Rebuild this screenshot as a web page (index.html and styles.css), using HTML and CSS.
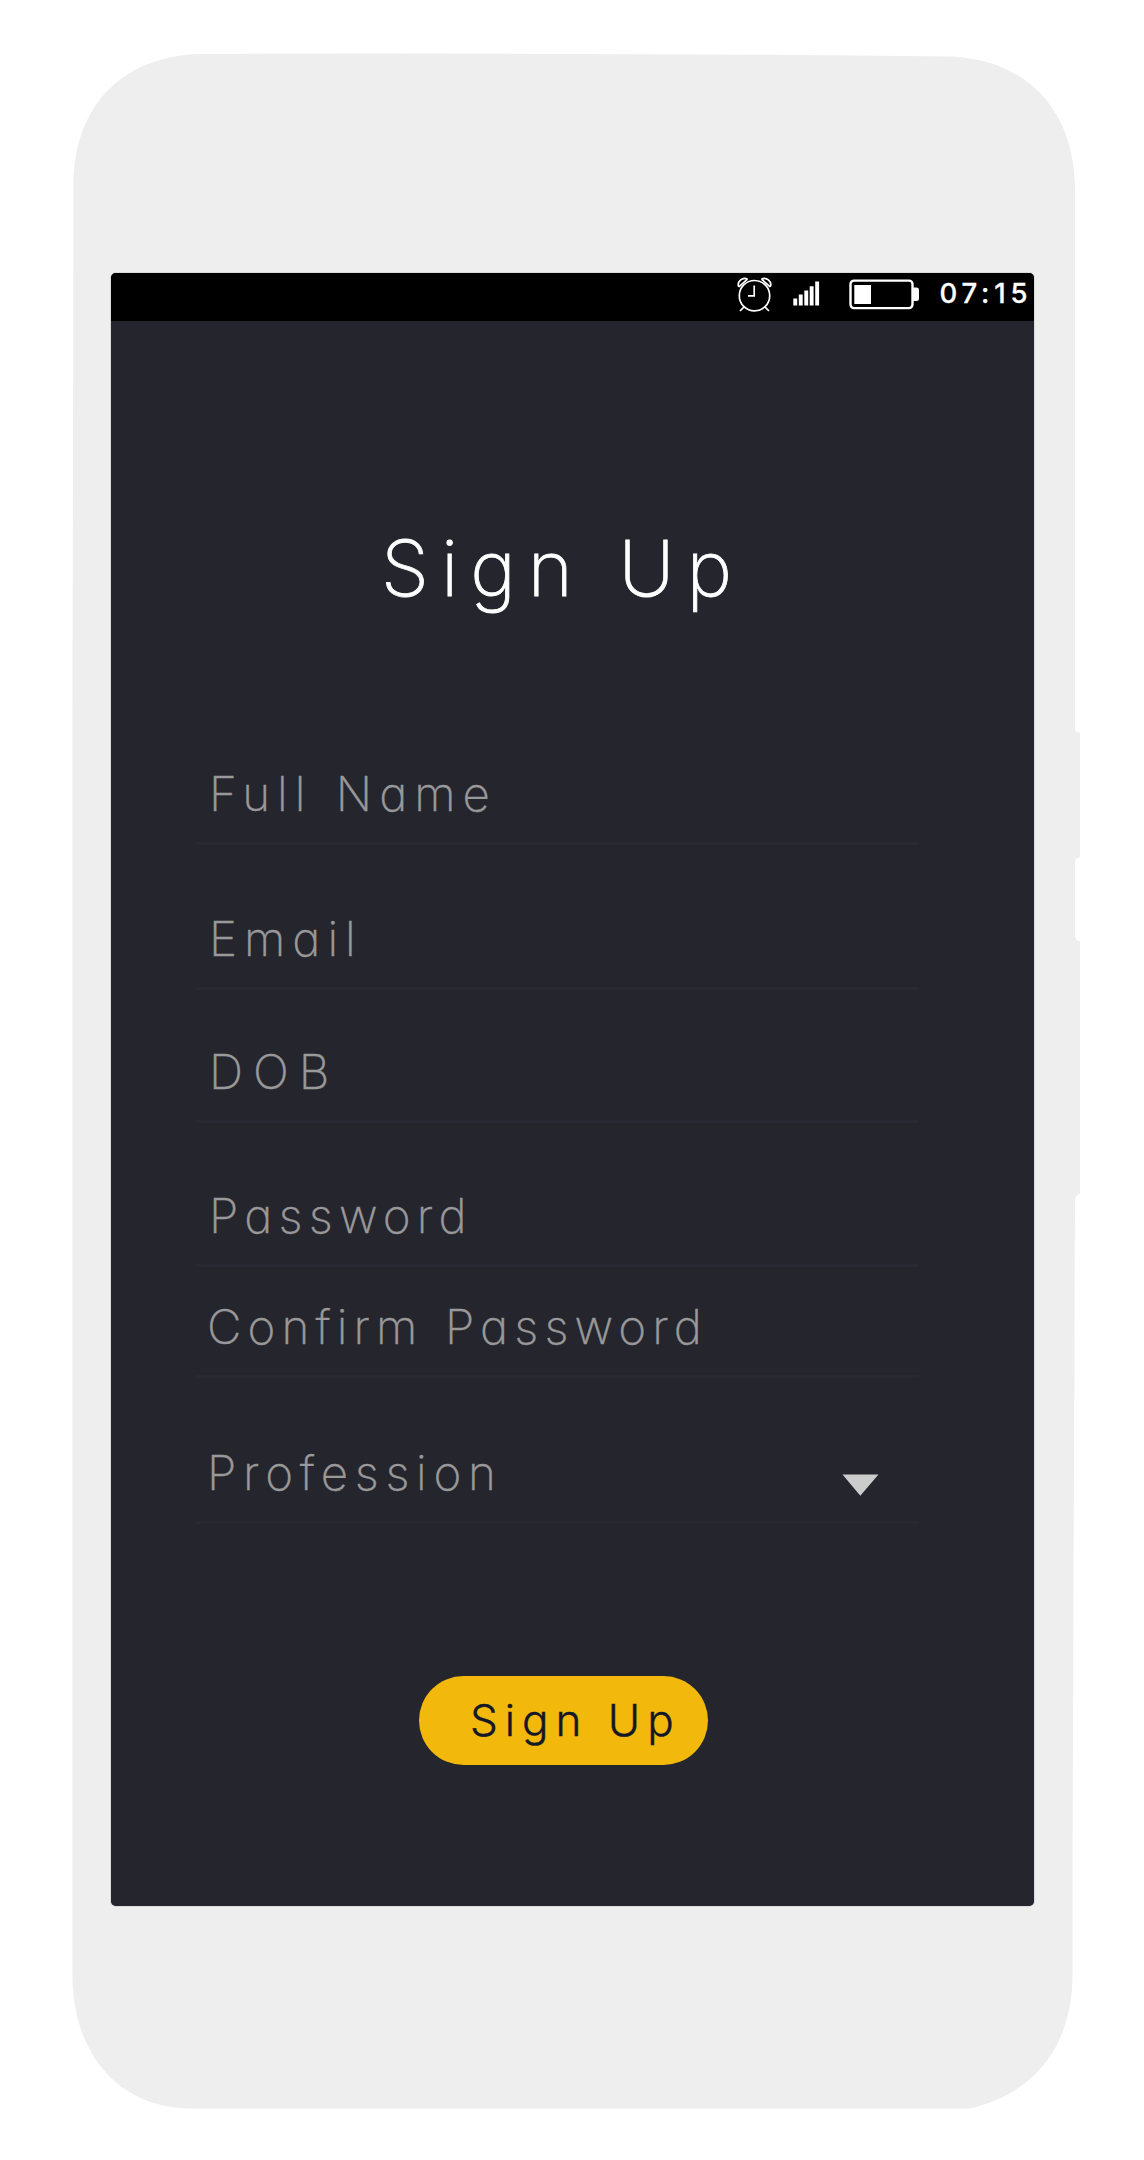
FILE: index.html
```
<!DOCTYPE html>
<html lang="en">
<head>
<meta charset="utf-8">
<title>Sign Up</title>
<link rel="stylesheet" href="styles.css">
</head>
<body>
<div class="phone">
  <svg class="phone-body" viewBox="0 0 1144 2160" aria-hidden="true">
    <path d="M200 54 Q570 52.500 951 56.500 C1030 60 1075 113 1075 190 V730 Q1075.500 732 1080 732.500 V857 Q1075.500 858 1075 862 V936 Q1075.500 941 1080 941.500 V1194 Q1075.500 1195 1075 1200 L1072.500 1860 V1975 C1072.500 2040 1040 2092 970 2108.500 H187 C115 2106 72.500 2050 72.500 1975 V700 L73.500 186 C73.500 104 124 56 200 54Z"/>
  </svg>
  <div class="screen">
    <header class="status">
      <svg class="alarm" viewBox="0 0 36 36" aria-hidden="true">
        <circle cx="17.500" cy="18.700" r="15.200"/>
        <path d="M17.200 8.500V18.800H11M7.500 29.500 3 34M27.500 29.500 32 34M1.800 9.800C-.5 5 5.500-.5 10.500 2.200M33.200 9.800C35.500 5 29.500-.5 24.500 2.200M1.800 9.800 10.500 2.200M33.200 9.800 24.500 2.200"/>
      </svg>
      <svg class="signal" viewBox="0 0 27 25" aria-hidden="true">
        <path d="M.3 17.500h3.900v7H.3zM5.800 13.500h3.900v11H5.800zM11.300 9.500h3.900v15h-3.900zM16.700 5.200h3.900v19.300h-3.900zM22.200.5h3.900v24h-3.900z"/>
      </svg>
      <svg class="battery" viewBox="0 0 70 31" aria-hidden="true">
        <rect class="shell" x="1.500" y="1.600" width="62" height="27.500" rx="3.500"/>
        <path d="M5.300 6h16.700v19H5.300zM64 8.500h3.500q2.500 0 2.500 2.500v8.500q0 2.500-2.500 2.500H64z"/>
      </svg>
      <time class="clock">07:15</time>
    </header>
    <main class="content">
      <h1 class="title">Sign Up</h1>
      <form class="form">
        <div class="field name">Full Name</div>
        <div class="field email">Email</div>
        <div class="field dob">DOB</div>
        <div class="field password">Password</div>
        <div class="field confirm">Confirm Password</div>
        <div class="field profession">Profession
          <svg class="arrow" viewBox="0 0 37 22" aria-hidden="true"><path d="M.5.500h36L18.300 21.700Z"/></svg>
        </div>
      </form>
      <button class="submit" type="button">Sign Up</button>
    </main>
  </div>
</div>
</body>
</html>
```
FILE: styles.css
```
body {
  margin: 0;
  background: #fff;
  font-family: Inter, "Liberation Sans", sans-serif;
  font-feature-settings: "cv11";
}

.phone {
  display: grid;
  width: 1144px;
  height: 2160px;
}

.phone-body,
.screen {
  grid-area: 1 / 1;
}

.phone-body {
  width: 1144px;
  height: 2160px;
  fill: #eee;
}

.screen {
  box-sizing: border-box;
  width: 922.5px;
  height: 1633px;
  margin: 273px 0 0 111px;
  border-radius: 5px;
  background: #25252e;
  box-shadow: 0 0 1px #333;
  overflow: hidden;
}

.status {
  display: flex;
  justify-content: flex-end;
  align-items: flex-start;
  height: 48px;
  background: #000;
  color: #fff;
}

.status svg {
  fill: #fff;
}

.status .alarm {
  width: 36px;
  height: 36px;
  margin: 4px 20px 0 0;
  fill: none;
  stroke: #fff;
  stroke-width: 1.7;
}

.signal {
  width: 27px;
  height: 25px;
  margin: 8px 29px 0 0;
}

.battery {
  width: 70px;
  height: 31px;
  margin: 6px 0 0;
}

.battery .shell {
  fill: none;
  stroke: #fff;
  stroke-width: 2.4;
}

.clock {
  width: 94px;
  margin-left: 21px;
  font-size: 27.5px;
  font-weight: 500;
  line-height: 40px;
  letter-spacing: 4.8px;
  white-space: nowrap;
  -webkit-text-stroke: 0.3px #fff;
}

.content {
  display: flex;
  flex-direction: column;
  padding: 207px 114.5px 0 85px;
}

.title {
  margin: 0 0 162px 185px;
  color: #fff;
  font-size: 77px;
  font-weight: 200;
  line-height: 80px;
  letter-spacing: 12px;
  -webkit-text-stroke: 0.8px #fff;
}

.field {
  display: flex;
  align-items: flex-start;
  justify-content: space-between;
  box-sizing: border-box;
  height: 75px;
  padding: 0 40px 24px 13px;
  border-bottom: 3px solid #282932;
  color: #999;
  font-size: 47.5px;
  font-weight: 200;
  line-height: 48px;
  letter-spacing: 6.2px;
  white-space: nowrap;
  -webkit-text-stroke: 0.4px #999;
}

.name {
  margin-bottom: 70px;
  letter-spacing: 7px;
  word-spacing: 3px;
}

.email {
  margin-bottom: 58px;
  letter-spacing: 7px;
}

.dob {
  margin-bottom: 69px;
  letter-spacing: 10px;
}

.password {
  margin-bottom: 36px;
}

.confirm {
  margin-bottom: 71px;
  padding-left: 11px;
  letter-spacing: 6.1px;
  word-spacing: 2px;
}

.profession {
  padding-left: 11px;
  letter-spacing: 6.7px;
}

.arrow {
  width: 37px;
  height: 22px;
  margin-top: 25px;
  fill: #ccc;
}

.submit {
  align-self: flex-start;
  width: 289px;
  height: 89px;
  margin: 152px 0 0 223px;
  padding: 0 0 0 51px;
  border: 0;
  border-radius: 45px;
  background: #f2b90c;
  color: #141826;
  font: 300 44px/89px Inter, "Liberation Sans", sans-serif;
  letter-spacing: 7px;
  text-align: left;
  white-space: nowrap;
  -webkit-text-stroke: 0.4px #141826;
}
```
